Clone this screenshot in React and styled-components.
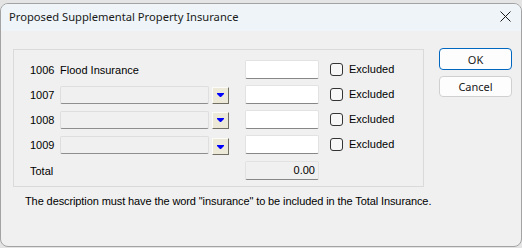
import styled, { createGlobalStyle } from "styled-components"

const Global = createGlobalStyle`
  html, body {
    margin: 0;
    padding: 0;
    background: #e4e4e4;
  }
  body {
    width: 522px;
    height: 248px;
    overflow: hidden;
  }
`

const Window = styled.div`
  box-sizing: border-box;
  width: 522px;
  height: 244px;
  margin-top: 3px;
  border: 1px solid #a3a3a3;
  border-radius: 8px;
  background: #f0f0f0;
  overflow: hidden;
  display: flex;
  flex-direction: column;
  font-family: "Liberation Sans", Arial, sans-serif;
  font-size: 11px;
  color: #000;
`

const TitleBar = styled.div`
  height: 27px;
  background: #eef4f8;
  display: flex;
  align-items: center;
  justify-content: space-between;
  padding: 0 10px 0 8px;
  flex-shrink: 0;
`

const Title = styled.div`
  font-family: "Segoe UI", "Noto Sans", sans-serif;
  font-size: 11.2px;
  color: #1a1a1a;
  margin-top: -2px;
`

const Close = styled.svg`
  width: 11px;
  height: 11px;
  margin-top: -2px;
`

const Body = styled.div`
  display: flex;
  gap: 15px;
  padding: 17px 9px 0 12px;
`

const Left = styled.div`
  width: 411px;
  display: flex;
  flex-direction: column;
  padding-top: 1px;
`

const Group = styled.div`
  box-sizing: border-box;
  height: 138px;
  border: 1px solid #dadada;
  padding: 10px 0 0 16px;
  display: flex;
  flex-direction: column;
  gap: 6px;
`

const Row = styled.div`
  display: flex;
  align-items: center;
  height: 19px;
  margin-top: ${(p) => (p.$total ? 1 : 0)}px;
`

const Code = styled.div`
  width: 30px;
`

const Description = styled.div`
  width: 169px;
  white-space: nowrap;
`

const Combo = styled.div`
  box-sizing: border-box;
  width: 149px;
  height: 18px;
  margin-top: 1px;
  background: #f0f0f0;
  border: 1px solid #dedede;
  border-bottom-color: #8e8e8e;
  border-radius: 2px;
`

const DropButton = styled.div`
  box-sizing: border-box;
  width: 17px;
  height: 17px;
  margin: ${(p) => (p.$low ? "4px 0 0 3px" : "1px 0 0 3px")};
  background: #ece9d8;
  border: 1px solid;
  border-color: #fbfbf7 #716f64 #716f64 #fbfbf7;
  display: flex;
  align-items: center;
  justify-content: center;
`

const Spacer = styled.div`
  width: ${(p) => p.$w}px;
`

const Amount = styled.div`
  box-sizing: border-box;
  width: 74px;
  height: 19px;
  margin-left: 16px;
  background: ${(p) => (p.$readonly ? "#f0f0f0" : "#ffffff")};
  border: 1px solid #e2e2e2;
  border-bottom-color: #878787;
  border-radius: 2px;
  text-align: right;
  line-height: 17px;
  padding-right: 3px;
`

const Check = styled.div`
  box-sizing: border-box;
  width: 13px;
  height: 13px;
  margin-left: 11px;
  border: 1px solid #333;
  border-radius: 3px;
  background: #f7f7f7;
`

const CheckLabel = styled.div`
  margin-left: 6px;
  margin-top: -2px;
`

const Note = styled.div`
  margin: 8px 0 0 12px;
  white-space: nowrap;
  letter-spacing: -0.1px;
`

const Right = styled.div`
  display: flex;
  flex-direction: column;
  gap: 6px;
`

const Button = styled.div`
  box-sizing: border-box;
  width: 73px;
  height: ${(p) => (p.$primary ? 22 : 21)}px;
  background: #fdfdfd;
  border: 1px solid ${(p) => (p.$primary ? "#0067c0" : "#d0d0d0")};
  border-radius: 4px;
  display: flex;
  align-items: center;
  justify-content: center;
  font-family: "Segoe UI", "Noto Sans", sans-serif;
  font-size: 11px;
  color: #1a1a1a;
`

const Arrow = () => (
  <svg width="7" height="4" viewBox="0 0 7 4">
    <polygon points="0,0 7,0 7,1 4,4 3,4 0,1" fill="#0000ff" />
  </svg>
)

const rows = [
  { code: "1006", label: "Flood Insurance" },
  { code: "1007" },
  { code: "1008" },
  { code: "1009", low: true },
]

export default function App() {
  return (
    <>
      <Global />
      <Window>
        <TitleBar>
          <Title>Proposed Supplemental Property Insurance</Title>
          <Close viewBox="0 0 11 11">
            <path d="M0.5 0.5 L10.5 10.5 M10.5 0.5 L0.5 10.5" stroke="#1a1a1a" strokeWidth="1" />
          </Close>
        </TitleBar>
        <Body>
          <Left>
            <Group>
              {rows.map((r) => (
                <Row key={r.code}>
                  <Code>{r.code}</Code>
                  {r.label ? (
                    <Description>{r.label}</Description>
                  ) : (
                    <>
                      <Combo />
                      <DropButton $low={r.low}>
                        <Arrow />
                      </DropButton>
                    </>
                  )}
                  <Amount />
                  <Check />
                  <CheckLabel>Excluded</CheckLabel>
                </Row>
              ))}
              <Row $total>
                <Code>Total</Code>
                <Spacer $w={169} />
                <Amount $readonly>0.00</Amount>
              </Row>
            </Group>
            <Note>
              The description must have the word "insurance" to be included in the Total Insurance.
            </Note>
          </Left>
          <Right>
            <Button $primary>OK</Button>
            <Button>Cancel</Button>
          </Right>
        </Body>
      </Window>
    </>
  )
}
